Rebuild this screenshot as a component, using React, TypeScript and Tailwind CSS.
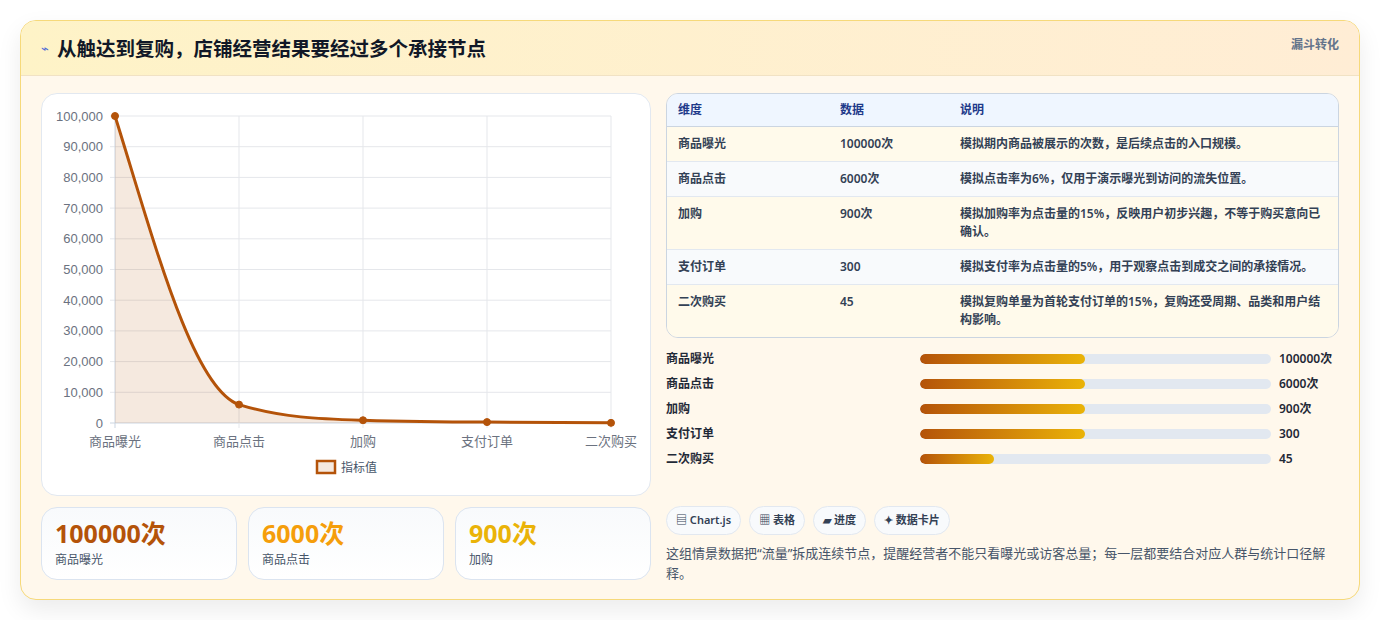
import React from "react";

const rows = [
  ["商品曝光", "100000次", "模拟期内商品被展示的次数，是后续点击的入口规模。"],
  ["商品点击", "6000次", "模拟点击率为6%，仅用于演示曝光到访问的流失位置。"],
  ["加购", "900次", "模拟加购率为点击量的15%，反映用户初步兴趣，不等于购买意向已确认。"],
  ["支付订单", "300", "模拟支付率为点击量的5%，用于观察点击到成交之间的承接情况。"],
  ["二次购买", "45", "模拟复购单量为首轮支付订单的15%，复购还受周期、品类和用户结构影响。"],
];

const bars = [
  ["商品曝光", 47, "100000次"],
  ["商品点击", 47, "6000次"],
  ["加购", 47, "900次"],
  ["支付订单", 47, "300"],
  ["二次购买", 21, "45"],
] as const;

function Chart() {
  const xs = [73, 197, 321, 445, 569];
  const y = (v: number) => 329 - (v / 100000) * 307;
  const vals = [100000, 6000, 900, 300, 45];
  const labels = ["商品曝光", "商品点击", "加购", "支付订单", "二次购买"];
  const line = `M73,${y(100000)} C110,140 150,295 197,${y(6000)} C240,324 280,325 321,${y(900)} C360,327.5 400,328 445,${y(300)} C490,328.6 530,329 569,${y(45)}`;
  return (
    <svg width="610" height="403" className="block" style={{ fontFamily: '"Liberation Sans","Noto Sans CJK SC",sans-serif' }}>
      {Array.from({ length: 11 }).map((_, i) => {
        const yy = 22 + i * 30.7;
        const v = 100000 - i * 10000;
        return (
          <g key={i}>
            <line x1="68" x2="569" y1={yy} y2={yy} stroke={i === 10 ? "#cbd5e1" : "#e5e7eb"} />
            <text x="61" y={yy + 4.5} textAnchor="end" fontSize="13" fill="#6b7280">{v.toLocaleString("en-US")}</text>
          </g>
        );
      })}
      {xs.map((x, i) => (
        <g key={i}>
          <line x1={x} x2={x} y1="22" y2="334" stroke={i === 0 ? "#cbd5e1" : "#e5e7eb"} />
          <text x={x} y="352" textAnchor="middle" fontSize="13" fill="#6b7280">{labels[i]}</text>
        </g>
      ))}
      <path d={`${line} L569,329 L73,329 Z`} fill="rgba(180,83,9,0.13)" />
      <path d={line} fill="none" stroke="#b45309" strokeWidth="3" />
      {xs.map((x, i) => (
        <circle key={i} cx={x} cy={y(vals[i])} r="3.5" fill="#b45309" stroke="#b45309" />
      ))}
      <rect x="275" y="367" width="18" height="12" fill="rgba(180,83,9,0.13)" stroke="#b45309" strokeWidth="2.5" />
      <text x="299" y="378" fontSize="12" fill="#475569">指标值</text>
    </svg>
  );
}

export default function App() {
  return (
    <div className="w-[1381px] h-[620px] bg-white p-5 pr-[21px]" style={{ fontFamily: '"Noto Sans","Noto Sans CJK SC",sans-serif' }}>
      <div className="h-[580px] rounded-2xl border border-[#f6d97a] bg-[#fff8ec] shadow-[0_10px_25px_rgba(0,0,0,0.08)] overflow-hidden flex flex-col">
        <div className="h-[55px] shrink-0 flex items-start justify-between px-5 bg-gradient-to-r from-[#fef3c7] to-[#ffedd5] border-b border-[#f1e2c4]">
          <div className="flex items-center gap-2 pt-[13px]">
            <span className="text-[13px] text-[#4f6bd6]">⌁</span>
            <span className="text-[19.5px] font-bold text-[#111827]">从触达到复购，店铺经营结果要经过多个承接节点</span>
          </div>
          <span className="pt-[15px] text-[12px] font-bold text-[#64748b]">漏斗转化</span>
        </div>
        <div className="flex gap-[15px] px-5 pt-[17px]">
          <div className="w-[610px] flex flex-col gap-[11px]">
            <div className="h-[403px] rounded-2xl border border-[#e2e8f0] bg-white overflow-hidden">
              <Chart />
            </div>
            <div className="flex gap-[11px]">
              {[["100000次", "text-[#b45309]", "商品曝光"], ["6000次", "text-[#f59e0b]", "商品点击"], ["900次", "text-[#eab308]", "加购"]].map(([n, c, l]) => (
                <div key={l} className="flex-1 h-[73px] rounded-2xl border border-[#dbe4f0] bg-gradient-to-b from-[#f8fafc] to-white px-[13px] pt-[8px]">
                  <div className={`text-[25px] font-bold leading-[34px] ${c}`}>{n}</div>
                  <div className="text-[12px] text-[#475569] mt-[1px]">{l}</div>
                </div>
              ))}
            </div>
          </div>
          <div className="flex-1 flex flex-col">
            <div className="rounded-xl border border-[#cbd5e1] overflow-hidden text-[12px] font-semibold text-[#334155]">
              <div className="flex h-[33px] items-center bg-[#eff6ff] text-[#1e3a8a] border-b border-[#cbd5e1]">
                <div className="w-[162px] pl-[11px]">维度</div>
                <div className="w-[120px] pl-[11px]">数据</div>
                <div className="flex-1 pl-[11px]">说明</div>
              </div>
              {rows.map((r, i) => (
                <div key={i} className={`flex py-[8px] leading-[18px] ${i % 2 === 0 ? "bg-[#fffaeb]" : "bg-[#f8fafc]"} ${i < 4 ? "border-b border-[#e2e8f0]" : ""}`}>
                  <div className="w-[162px] pl-[11px]">{r[0]}</div>
                  <div className="w-[120px] pl-[11px]">{r[1]}</div>
                  <div className="flex-1 pl-[11px] pr-[8px]">{r[2]}</div>
                </div>
              ))}
            </div>
            <div className="flex flex-col gap-[7px] mt-[12px] text-[12px] font-semibold text-[#1f2937]">
              {bars.map(([l, p, v]) => (
                <div key={l} className="flex items-center h-[18px]">
                  <div className="w-[254px]">{l}</div>
                  <div className="w-[351px] h-[10px] rounded-full bg-[#e2e8f0] overflow-hidden">
                    <div className="h-full rounded-full bg-gradient-to-r from-[#b45309] to-[#eab308]" style={{ width: `${p}%` }} />
                  </div>
                  <div className="ml-[8px]">{v}</div>
                </div>
              ))}
            </div>
            <div className="flex gap-[8px] mt-[38px]">
              {["▤ Chart.js", "▦ 表格", "▰ 进度", "✦ 数据卡片"].map((t) => (
                <div key={t} className="h-[29px] px-[9px] flex items-center rounded-full border border-[#e2e8f0] bg-[#f8fafc] text-[11px] font-semibold text-[#334155]">{t}</div>
              ))}
            </div>
            <div className="mt-[8px] text-[13px] leading-[20px] text-[#475569]">
              这组情景数据把“流量”拆成连续节点，提醒经营者不能只看曝光或访客总量；每一层都要结合对应人群与统计口径解释。
            </div>
          </div>
        </div>
      </div>
    </div>
  );
}
